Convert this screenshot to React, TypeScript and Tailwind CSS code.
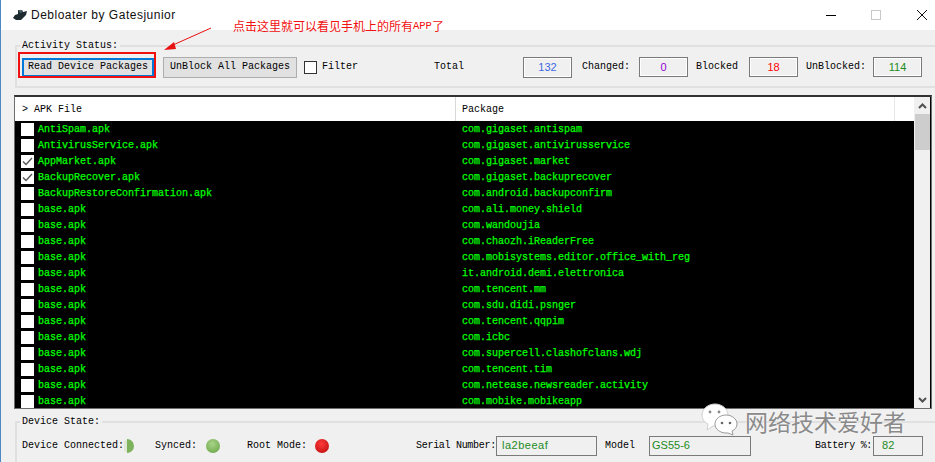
import React from "react";

const rows: [string, string, boolean][] = [
  ["AntiSpam.apk", "com.gigaset.antispam", false],
  ["AntivirusService.apk", "com.gigaset.antivirusservice", false],
  ["AppMarket.apk", "com.gigaset.market", true],
  ["BackupRecover.apk", "com.gigaset.backuprecover", true],
  ["BackupRestoreConfirmation.apk", "com.android.backupconfirm", false],
  ["base.apk", "com.ali.money.shield", false],
  ["base.apk", "com.wandoujia", false],
  ["base.apk", "com.chaozh.iReaderFree", false],
  ["base.apk", "com.mobisystems.editor.office_with_reg", false],
  ["base.apk", "it.android.demi.elettronica", false],
  ["base.apk", "com.tencent.mm", false],
  ["base.apk", "com.sdu.didi.psnger", false],
  ["base.apk", "com.tencent.qqpim", false],
  ["base.apk", "com.icbc", false],
  ["base.apk", "com.supercell.clashofclans.wdj", false],
  ["base.apk", "com.tencent.tim", false],
  ["base.apk", "com.netease.newsreader.activity", false],
  ["base.apk", "com.mobike.mobikeapp", false],
];

const Counter = ({ value, color, h = "h-[20px]" }: { value: string; color: string; h?: string }) => (
  <div className={`w-[49px] ${h} flex items-center justify-center border border-[#7a7a7a] shadow-[inset_0_0_0_1px_#fff] text-[11px] font-['Liberation_Sans',sans-serif] ${color}`}>
    {value}
  </div>
);

const ValueBox = ({ value, w, pad }: { value: string; w: string; pad: string }) => (
  <div className={`${w} ${pad} h-[20px] flex items-center border border-[#7a7a7a] text-[11px] text-[#228b22] font-['Liberation_Sans',sans-serif]`}>
    {value}
  </div>
);

const Led = ({ id, from, to }: { id: string; from: string; to: string }) => (
  <svg width="14" height="14" viewBox="0 0 14 14" className="shrink-0">
    <defs>
      <radialGradient id={id} cx="45%" cy="35%" r="65%">
        <stop offset="0%" stopColor={from} />
        <stop offset="100%" stopColor={to} />
      </radialGradient>
    </defs>
    <circle cx="7" cy="7" r="7" fill={`url(#${id})`} />
  </svg>
);

export default function App() {
  return (
    <div className="relative w-[935px] h-[462px] overflow-hidden flex flex-col bg-[#f0f0f0] border-l border-[#4f86c6] text-[10px] leading-none text-black font-['Liberation_Mono',monospace]">
      {/* title bar */}
      <div className="h-[30px] shrink-0 bg-white flex items-center pl-[11px]">
        <svg width="16" height="12" viewBox="0 0 16 12">
          <path d="M1 9 L4 11 L9 11 L14 6 L15 2 L11 3 L10 1 L6 1 L6 5 L3 6 Z" fill="#1d2a30" />
          <path d="M6 1 L10 1 L11 3 L8 4 Z" fill="#4a5c66" />
        </svg>
        <span className="ml-[3px] text-[12px] font-['Liberation_Sans',sans-serif] text-[#111] tracking-[0.5px]">Debloater by Gatesjunior</span>
        <div className="ml-auto flex items-center">
          <div className="w-[10px] h-px bg-black mr-[35px]" />
          <div className="w-[10px] h-[10px] border border-[#c8c8c8] mr-[36px]" />
          <svg width="10" height="10" viewBox="0 0 10 10" className="mr-[8px]">
            <path d="M0 0 L10 10 M10 0 L0 10" stroke="#111" strokeWidth="1" />
          </svg>
        </div>
      </div>

      {/* activity status */}
      <div className="relative mt-[15px] ml-[14px] h-[43px] shrink-0 border-y-2 border-l-2 border-[#e0e0e0] flex items-center pl-[5px] pt-[1px]">
        <span className="absolute left-[3px] top-[-6px] px-[2px] bg-[#f0f0f0]">Activity Status:</span>
        <button className="w-[132px] h-[19px] bg-[#e1e1e1] border-2 border-[#0078d7]">Read Device Packages</button>
        <button className="ml-[9px] w-[134px] h-[21px] bg-[#e1e1e1] border border-[#adadad]">UnBlock All Packages</button>
        <div className="ml-[7px] w-[13px] h-[13px] bg-white border border-[#333]" />
        <span className="ml-[5px]">Filter</span>
        <span className="ml-[76px]">Total</span>
        <div className="ml-[59px]">
          <Counter value="132" color="text-[#4169e1]" h="h-[21px]" />
        </div>
        <span className="ml-[10px]">Changed:</span>
        <div className="ml-[9px]">
          <Counter value="0" color="text-[#9400d3]" />
        </div>
        <span className="ml-[8px]">Blocked</span>
        <div className="ml-[11px]">
          <Counter value="18" color="text-[#ff0000]" />
        </div>
        <span className="ml-[8px]">UnBlocked:</span>
        <div className="ml-[7px]">
          <Counter value="114" color="text-[#228b22]" />
        </div>
      </div>

      {/* package table */}
      <div className="mt-[7px] ml-[13px] w-[918px] h-[314px] shrink-0 flex border border-[#6d6d6d] border-t-2 border-t-[#333] bg-black">
        <div className="flex-1 min-w-0 flex flex-col overflow-hidden border-r border-[#f0f0f0]">
          <div className="h-[24px] shrink-0 bg-white flex items-center">
            <div className="w-[441px] h-full flex items-center border-r border-[#d8d8d8] pl-[7px] pt-[2px]">
              <span className="w-[12px]">&gt;</span>
              <span>APK File</span>
            </div>
            <div className="w-[439px] h-full flex items-center border-r border-[#e6e6e6] pl-[6px] pt-[2px]">Package</div>
          </div>
          {rows.map(([apk, pkg, checked], i) => (
            <div key={i} className="h-[16px] shrink-0 flex items-center text-[#00ff00] [-webkit-text-stroke:0.25px_#00ff00]">
              <div className="w-[441px] flex items-center pl-[6px]">
                <div className="w-[13px] h-[13px] bg-white flex items-center justify-center">
                  {checked && (
                    <svg width="11" height="9" viewBox="0 0 11 9">
                      <path d="M1 4.5 L4 7.5 L10 1" fill="none" stroke="#555" strokeWidth="1.4" />
                    </svg>
                  )}
                </div>
                <span className="ml-[4px] pt-[2px]">{apk}</span>
              </div>
              <span className="pl-[6px] pt-[2px] whitespace-pre">{pkg}</span>
            </div>
          ))}
        </div>
        <div className="w-[15px] mr-px shrink-0 bg-[#f0f0f0] flex flex-col">
          <div className="h-[17px] flex items-center justify-center">
            <svg width="9" height="6" viewBox="0 0 9 6">
              <path d="M1 5 L4.5 1.5 L8 5" fill="none" stroke="#505050" strokeWidth="2" />
            </svg>
          </div>
          <div className="h-[36px] bg-[#cdcdcd]" />
          <div className="flex-1" />
          <div className="h-[17px] flex items-center justify-center">
            <svg width="9" height="6" viewBox="0 0 9 6">
              <path d="M1 1 L4.5 4.5 L8 1" fill="none" stroke="#505050" strokeWidth="2" />
            </svg>
          </div>
        </div>
      </div>

      {/* device state */}
      <div className="relative mt-[12px] ml-[14px] flex-1 border-t-2 border-l-2 border-[#e0e0e0] flex items-center pl-[5px] pt-[6px]">
        <span className="absolute left-[3px] top-[-6px] px-[2px] bg-[#f0f0f0]">Device State:</span>
        <span className="w-[102px] whitespace-pre shrink-0">Device Connected:</span>
        <svg width="10" height="14" viewBox="0 0 10 14" className="shrink-0">
          <circle cx="3" cy="7" r="7" fill="#7db35c" />
          <rect x="0" y="0" width="3" height="14" fill="#f0f0f0" />
          <path d="M3 1 A6 6 0 0 0 0 2 L0 12 A6 6 0 0 0 3 13 Z" fill="#dfe8d6" />
        </svg>
        <span className="ml-[21px]">Synced:</span>
        <div className="ml-[9px]"><Led id="ledSynced" from="#a9d488" to="#74ad52" /></div>
        <span className="ml-[27px]">Root Mode:</span>
        <div className="ml-[8px]"><Led id="ledRoot" from="#ff3a3a" to="#c81414" /></div>
        <span className="ml-[87px] w-[80px] whitespace-pre tracking-[-0.3px]">Serial Number:</span>
        <ValueBox value="la2beeaf" w="w-[101px]" pad="pl-[5px] tracking-[0.5px]" />
        <span className="ml-[8px]">Model</span>
        <div className="ml-[14px]"><ValueBox value="GS55-6" w="w-[102px]" pad="pl-[2px]" /></div>
        <span className="ml-[64px] w-[58px] whitespace-pre tracking-[-0.3px]">Battery %:</span>
        <ValueBox value="82" w="w-[50px]" pad="pl-[8px]" />
      </div>

      {/* red annotation drawn on top of the screenshot */}
      <div className="absolute left-[17px] top-[52px] w-[138px] h-[26px] border-2 border-[#f01010]" />
      <span className="absolute left-[232px] top-[20px] flex items-center text-[12px] text-[#f01010] font-['Noto_Sans_CJK_SC',sans-serif]">
        点击这里就可以看见手机上的所有
        <span className="text-[10.5px] font-['Liberation_Mono',monospace]">APP</span>了
      </span>
      <svg className="absolute left-[160px] top-[24px]" width="56" height="30" viewBox="0 0 56 30">
        <path d="M50 4 L12 21" stroke="#e81010" strokeWidth="1" />
        <path d="M3 26 L13 18 L15 25 Z" fill="#e81010" />
      </svg>

      {/* watermark */}
      <div className="absolute left-[700px] top-[403px] flex items-start">
        <svg width="37" height="33" viewBox="0 0 37 33">
          <path d="M14 1 C21 1 27 6 27 12 C27 18 21 23 14 23 L12 23 L6 27 L7 21 C3 19 1 16 1 12 C1 6 7 1 14 1 Z" fill="#fff" stroke="#d0d0d0" />
          <path d="M25 12 C31 12 36 16 36 21 C36 24 34 27 31 28 L32 32 L27 30 L25 30 C19 30 14 26 14 21 C14 16 19 12 25 12 Z" fill="#fff" stroke="#9a9a9a" />
          <circle cx="9" cy="9" r="1.4" fill="#8a8a8a" />
          <circle cx="18" cy="9" r="1.4" fill="#8a8a8a" />
          <circle cx="21" cy="20" r="1.3" fill="#666" />
          <circle cx="29" cy="20" r="1.3" fill="#666" />
        </svg>
        <span className="ml-[7px] mt-[7px] text-[23px] leading-none text-[#8a8a8a] font-['Noto_Sans_CJK_SC',sans-serif] [text-shadow:0_0_2px_#fff]">网络技术爱好者</span>
      </div>
    </div>
  );
}
